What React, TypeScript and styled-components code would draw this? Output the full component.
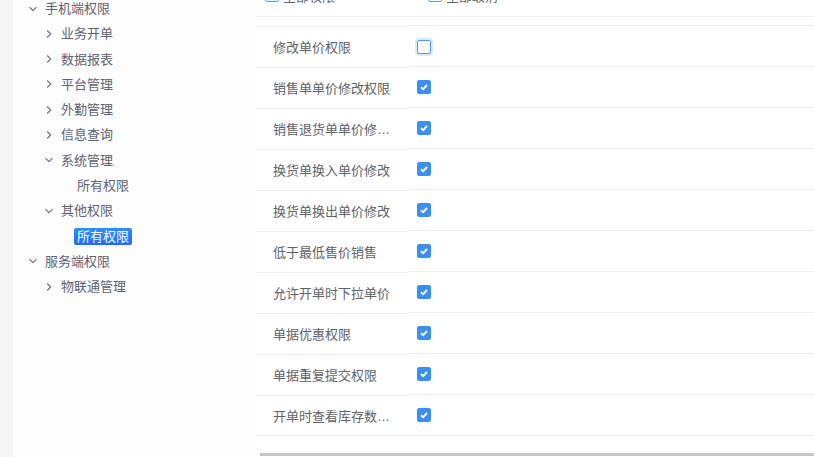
import React from 'react';
import styled, {createGlobalStyle} from 'styled-components';

const GlobalStyle = createGlobalStyle`
    html, body {
        margin: 0;
        padding: 0;
        background: #ffffff;
    }
    body {
        font-family: "Liberation Sans", "Noto Sans CJK SC", sans-serif;
        font-size: 13px;
        overflow: hidden;
    }
`;

const Page = styled.div`
    display: flex;
    width: 814px;
    height: 457px;
    overflow: hidden;
`;

const Gutter = styled.div`
    width: 13px;
    flex-shrink: 0;
    background: #f5f5f6;
`;

const TreePanel = styled.div`
    width: 242px;
    flex-shrink: 0;
    background: #fdfdfd;
    margin-top: -4px;
`;

const TreeRow = styled.div<{level: number}>`
    display: flex;
    align-items: center;
    height: 25.27px;
    padding-left: ${(p) => 14 + p.level * 16}px;
    color: #5d6170;
    white-space: nowrap;
`;

const Caret = styled.span`
    width: 12px;
    height: 12px;
    margin-right: 6px;
    display: inline-flex;
    align-items: center;
    justify-content: center;
    color: #6b6f7a;
`;

const CaretSpacer = styled.span`
    width: 18px;
`;

const NodeLabel = styled.span<{active?: boolean}>`
    line-height: 17px;
    padding: 0 3px;
    margin-left: -3px;
    border-radius: 2px;
    color: ${(p) => (p.active ? '#ffffff' : 'inherit')};
    background: ${(p) => (p.active ? 'linear-gradient(180deg, #2f8ff7 0%, #1b6ef0 100%)' : 'transparent')};
`;

const Main = styled.div`
    flex: 1;
    display: flex;
    flex-direction: column;
    background: #ffffff;
    position: relative;
`;

const TopRow = styled.div`
    display: flex;
    align-items: flex-start;
    height: 16px;
    border-bottom: 1px solid #ebeef5;
    overflow: hidden;
`;

const TopItem = styled.div<{w: number}>`
    display: flex;
    align-items: center;
    gap: 4px;
    width: ${(p) => p.w}px;
    padding-left: 10px;
    margin-top: -14px;
    color: #606266;
`;

const Spacer = styled.div`
    height: 9px;
`;

const Row = styled.div`
    display: flex;
    height: 41px;
`;

const LabelCell = styled.div`
    width: 153px;
    box-sizing: border-box;
    padding: 0 12px 0 18px;
    border-top: 1px solid #ebeef5;
    display: flex;
    align-items: center;
    color: #606266;
    overflow: hidden;
`;

const LabelText = styled.span`
    white-space: nowrap;
    overflow: hidden;
    text-overflow: ellipsis;
    margin-top: -1px;
`;

const ValueCell = styled.div`
    flex: 1;
    box-sizing: border-box;
    padding-left: 9px;
    margin-top: -1px;
    border-top: 1px solid #ebeef5;
    display: flex;
    align-items: center;
`;

const Box = styled.span<{checked?: boolean; focus?: boolean}>`
    width: 14px;
    height: 14px;
    flex-shrink: 0;
    box-sizing: border-box;
    border-radius: 2px;
    display: inline-flex;
    align-items: center;
    justify-content: center;
    background: ${(p) => (p.checked ? '#3a8ff0' : '#ffffff')};
    border: 1px solid ${(p) => (p.checked ? '#3a8ff0' : '#4a9cf6')};
    box-shadow: ${(p) => (p.focus ? '0 0 0 2px rgba(64, 158, 255, 0.2)' : 'none')};
    margin-top: ${(p) => (p.focus ? 1 : -1)}px;
`;

const LastLine = styled.div`
    border-top: 1px solid #ebeef5;
    margin-top: -1px;
`;

const Scrollbar = styled.div`
    position: absolute;
    left: 5px;
    right: 0;
    bottom: 1px;
    height: 3px;
    background: #c6c6c6;
`;

const Chevron = ({down}: {down?: boolean}) => (
    <svg width="10" height="10" viewBox="0 0 10 10" fill="none" stroke="currentColor" strokeWidth="1.1">
        {down ? <path d="M1.5 3.2 L5 6.7 L8.5 3.2" /> : <path d="M3.2 1.5 L6.7 5 L3.2 8.5" />}
    </svg>
);

const Check = () => (
    <svg width="10" height="10" viewBox="0 0 10 10" fill="none" stroke="#ffffff" strokeWidth="1.9">
        <path d="M2 5.2 L4.2 7.2 L8 3" />
    </svg>
);

interface TreeNode {
    label: string;
    level: number;
    caret?: 'down' | 'right';
    active?: boolean;
}

const treeNodes: TreeNode[] = [
    {label: '手机端权限', level: 0, caret: 'down'},
    {label: '业务开单', level: 1, caret: 'right'},
    {label: '数据报表', level: 1, caret: 'right'},
    {label: '平台管理', level: 1, caret: 'right'},
    {label: '外勤管理', level: 1, caret: 'right'},
    {label: '信息查询', level: 1, caret: 'right'},
    {label: '系统管理', level: 1, caret: 'down'},
    {label: '所有权限', level: 2},
    {label: '其他权限', level: 1, caret: 'down'},
    {label: '所有权限', level: 2, active: true},
    {label: '服务端权限', level: 0, caret: 'down'},
    {label: '物联通管理', level: 1, caret: 'right'},
];

const permissions = [
    {label: '修改单价权限', checked: false},
    {label: '销售单单价修改权限', checked: true},
    {label: '销售退货单单价修改权限', checked: true},
    {label: '换货单换入单价修改', checked: true},
    {label: '换货单换出单价修改', checked: true},
    {label: '低于最低售价销售', checked: true},
    {label: '允许开单时下拉单价', checked: true},
    {label: '单据优惠权限', checked: true},
    {label: '单据重复提交权限', checked: true},
    {label: '开单时查看库存数量权限', checked: true},
];

export default function App() {
    return (
        <>
            <GlobalStyle />
            <Page>
                <Gutter />
                <TreePanel>
                    {treeNodes.map((node, i) => (
                        <TreeRow key={i} level={node.level}>
                            {node.caret ? (
                                <Caret>
                                    <Chevron down={node.caret === 'down'} />
                                </Caret>
                            ) : (
                                <CaretSpacer />
                            )}
                            <NodeLabel active={node.active}>{node.label}</NodeLabel>
                        </TreeRow>
                    ))}
                </TreePanel>
                <Main>
                    <TopRow>
                        <TopItem w={153}>
                            <Box />
                            <span>全部权限</span>
                        </TopItem>
                        <TopItem w={200}>
                            <Box />
                            <span>全部取消</span>
                        </TopItem>
                    </TopRow>
                    <Spacer />
                    {permissions.map((p) => (
                        <Row key={p.label}>
                            <LabelCell>
                                <LabelText>{p.label}</LabelText>
                            </LabelCell>
                            <ValueCell>
                                <Box checked={p.checked} focus={!p.checked}>
                                    {p.checked && <Check />}
                                </Box>
                            </ValueCell>
                        </Row>
                    ))}
                    <LastLine />
                    <Scrollbar />
                </Main>
            </Page>
        </>
    );
}
